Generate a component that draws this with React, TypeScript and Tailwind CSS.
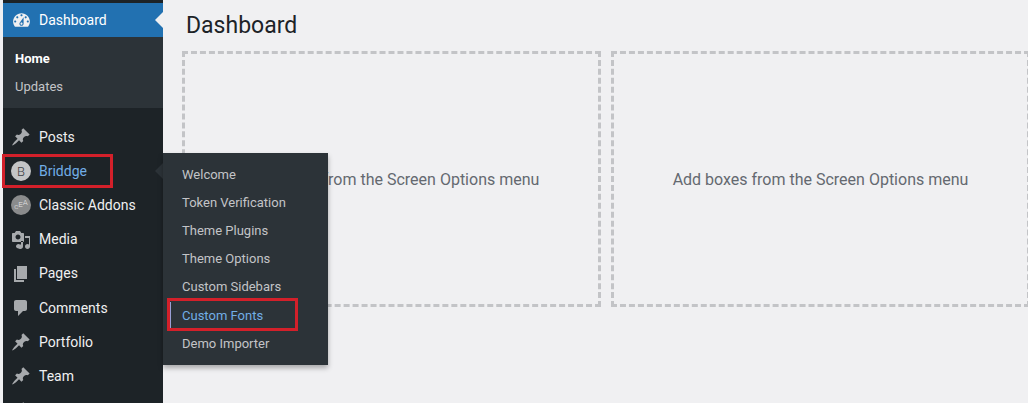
import React from 'react';

type IconProps = { className?: string };

const pinPath =
  'M10.44 3.02l1.82-1.82 6.36 6.35-1.83 1.82c-1.05-.68-2.48-.57-3.41.36l-.75.75c-.92.93-1.04 2.35-.35 3.41l-1.83 1.82-2.41-2.41-2.8 2.79c-.42.42-3.38 2.71-3.8 2.29s1.86-3.39 2.28-3.81l2.79-2.79L4.1 9.36l1.83-1.82c1.05.69 2.48.57 3.4-.36l.75-.75c.93-.92 1.05-2.35.36-3.41z';

function Dash({ d, className }: IconProps & { d: string }) {
  return (
    <svg viewBox="0 0 20 20" className={className} fill="currentColor">
      <path fillRule="evenodd" d={d} />
    </svg>
  );
}

const DashboardIcon = ({ className }: IconProps) => (
  <Dash
    className={className}
    d="M3.76 16h12.48c1.1-1.37 1.76-3.11 1.76-5 0-4.42-3.58-8-8-8s-8 3.58-8 8c0 1.89.66 3.63 1.76 5zM10 4c.55 0 1 .45 1 1s-.45 1-1 1-1-.45-1-1 .45-1 1-1zM6 6c.55 0 1 .45 1 1s-.45 1-1 1-1-.45-1-1 .45-1 1-1zm8 0c.55 0 1 .45 1 1s-.45 1-1 1-1-.45-1-1 .45-1 1-1zm-5.37 5.55L12 7v6c0 1.1-.9 2-2 2s-2-.9-2-2c0-.57.24-1.08.63-1.45zM4 10c.55 0 1 .45 1 1s-.45 1-1 1-1-.45-1-1 .45-1 1-1zm12 0c.55 0 1 .45 1 1s-.45 1-1 1-1-.45-1-1 .45-1 1-1zm-5 3c0-.55-.45-1-1-1s-1 .45-1 1 .45 1 1 1 1-.45 1-1z"
  />
);
const PinIcon = ({ className }: IconProps) => <Dash className={className} d={pinPath} />;
const MediaIcon = ({ className }: IconProps) => (
  <Dash
    className={className}
    d="M13 11V4c0-.55-.45-1-1-1h-1.67L9 1H5L3.67 3H2c-.55 0-1 .45-1 1v7c0 .55.45 1 1 1h10c.55 0 1-.45 1-1zM7 4.5c1.38 0 2.5 1.12 2.5 2.5S8.38 9.5 7 9.5 4.5 8.38 4.5 7 5.62 4.5 7 4.5zM14 6h5v10.5c0 1.38-1.12 2.5-2.5 2.5S14 17.88 14 16.5s1.12-2.5 2.5-2.5c.57 0 1.08.19 1.5.5V8h-4V6zm-4 8.5V11h2v5.5c0 1.38-1.12 2.5-2.5 2.5S5 17.88 5 16.5 6.12 14 7.5 14c.57 0 1.08.19 1.5.5z"
  />
);
const PagesIcon = ({ className }: IconProps) => (
  <Dash className={className} d="M6 15V2h10v13H6zm-1 1h8v2H3V5h2v11z" />
);
const CommentsIcon = ({ className }: IconProps) => (
  <Dash
    className={className}
    d="M5 2h9c1.1 0 2 .9 2 2v7c0 1.1-.9 2-2 2h-2l-5 5v-5H5c-1.1 0-2-.9-2-2V4c0-1.1.9-2 2-2z"
  />
);

function BriddgeIcon() {
  return (
    <div className="w-5 h-5 rounded-full bg-[#c4c5c6] flex items-center justify-center text-[13px] font-light leading-none text-[#3c4044]">
      B
    </div>
  );
}

function AddonsIcon() {
  return (
    <div className="w-5 h-5 rounded-full bg-[#8a8b8c] flex items-center justify-center text-[8px] font-light leading-none text-[#e4e4e4]">
      <span className="translate-y-[2px]">c</span>
      <span>E</span>
      <span className="-translate-y-[2px]">A</span>
    </div>
  );
}

const menu = [
  { label: 'Posts', icon: <PinIcon className="w-5 h-5" /> },
  { label: 'Briddge', icon: <BriddgeIcon />, active: true },
  { label: 'Classic Addons', icon: <AddonsIcon /> },
  { label: 'Media', icon: <MediaIcon className="w-5 h-5" /> },
  { label: 'Pages', icon: <PagesIcon className="w-5 h-5" /> },
  { label: 'Comments', icon: <CommentsIcon className="w-5 h-5" /> },
  { label: 'Portfolio', icon: <PinIcon className="w-5 h-5" /> },
  { label: 'Team', icon: <PinIcon className="w-5 h-5" /> },
  { label: '', icon: <PinIcon className="w-5 h-5" /> },
];

const flyout = [
  'Welcome',
  'Token Verification',
  'Theme Plugins',
  'Theme Options',
  'Custom Sidebars',
  'Custom Fonts',
  'Demo Importer',
];

function Sidebar() {
  return (
    <aside className="relative w-[160px] ml-[3px] shrink-0 bg-[#1d2327] pt-[3px] text-[14px] text-[#f0f0f1]">
      <div className="relative h-[34px] bg-[#2271b1] flex items-center text-white">
        <div className="w-[36px] flex justify-center text-[#f0f0f1]">
          <DashboardIcon className="w-[21px] h-[21px]" />
        </div>
        <span>Dashboard</span>
        <div className="absolute right-0 top-[9px] w-0 h-0 border-y-8 border-y-transparent border-r-8 border-r-[#f0f0f1]" />
      </div>
      <div className="bg-[#2c3338] h-[71px] pt-[8px] pl-3 text-[13px]">
        <div className="h-[28px] flex items-center font-bold text-white">Home</div>
        <div className="h-[28px] flex items-center text-[#c3c4c7]">Updates</div>
      </div>
      <ul className="pt-3">
        {menu.map((item) => (
          <li key={item.label} className="relative h-[34.2px] flex items-center">
            <div className="w-[36px] flex justify-center text-[#a7aaad]">{item.icon}</div>
            <span className={item.active ? 'text-[#72aee6]' : ''}>{item.label}</span>
            {item.active && (
              <div className="absolute right-0 top-[9px] w-0 h-0 border-y-8 border-y-transparent border-r-8 border-r-[#2c3338]" />
            )}
          </li>
        ))}
      </ul>
      <div className="absolute left-[-1px] top-[154px] w-[111px] h-[34px] border-[3px] border-[#d3202a]" />
      <Flyout />
    </aside>
  );
}

function Flyout() {
  return (
    <div className="absolute left-[160px] top-[153px] w-[165px] h-[212px] bg-[#2c3338] pt-[7.6px] text-[13px] text-[#c3c4c7] shadow-[0_3px_5px_rgba(0,0,0,0.3)]">
      {flyout.map((label) => {
        const current = label === 'Custom Fonts';
        return (
          <div key={label} className={`relative h-[28.15px] flex items-center pl-[19px] ${current ? 'text-[#72aee6]' : ''}`}>
            {label}
            {current && (
              <>
                <div className="absolute left-[7px] top-[1px] bottom-0 w-px bg-[#9a9fd6]" />
                <div className="absolute left-[4px] top-[-3px] w-[131px] h-[33px] border-[3px] border-[#d3202a]" />
              </>
            )}
          </div>
        );
      })}
    </div>
  );
}

function DropBox() {
  return (
    <div className="w-[419px] shrink-0 h-[256px] pt-[2px] border-[3px] border-dashed border-[#c3c4c7] flex items-center justify-center text-[16px] text-[#646970]">
      Add boxes from the Screen Options menu
    </div>
  );
}

export default function App() {
  return (
    <div
      className="w-[1028px] h-[403px] overflow-hidden flex bg-[#f0f0f2]"
      style={{ fontFamily: 'Roboto, "Noto Sans", sans-serif' }}
    >
      <Sidebar />
      <main className="pl-[19px] pt-[10px] min-w-0">
        <h1 className="pl-1 text-[23px] leading-[32px] text-[#1d2327] mb-[9px]">Dashboard</h1>
        <div className="flex gap-[10px]">
          <DropBox />
          <DropBox />
        </div>
      </main>
    </div>
  );
}
